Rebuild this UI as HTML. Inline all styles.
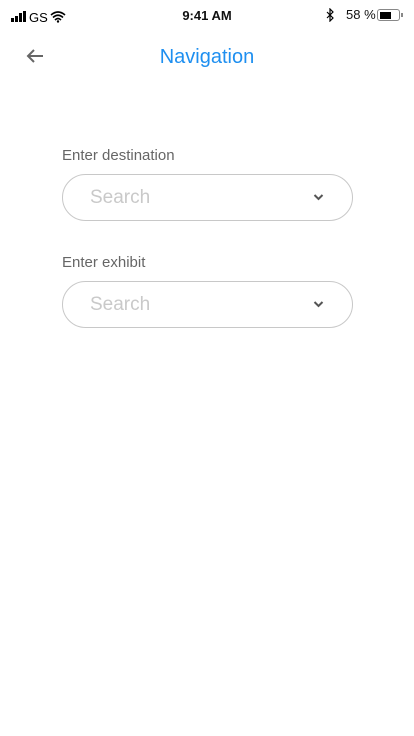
<!DOCTYPE html>
<html><head><meta charset="utf-8"><style>
body{margin:0;width:414px;height:736px;background:#fff;font-family:"Liberation Sans",sans-serif;position:relative;overflow:hidden}
.a{position:absolute}
.box{position:absolute;left:62px;width:289px;height:45px;border:1px solid #c8c8c8;border-radius:24px}
.ph{position:absolute;left:27px;top:12px;font-size:19px;color:#c9c9c9}
.lbl{position:absolute;left:62px;font-size:15px;color:#666}
</style></head><body>
<div class="a" style="left:11px;top:10px;">
<svg width="80" height="14"><rect x="0" y="8" width="3" height="4" fill="#000"/><rect x="4" y="6" width="3" height="6" fill="#000"/><rect x="8" y="3" width="3" height="9" fill="#000"/><rect x="12" y="1" width="3" height="11" fill="#000"/>
<text x="18" y="12" font-size="13" font-family="Liberation Sans">GS</text>
<path d="M40 5 Q47 -1 54 5 M42 7.5 Q47 3 52 7.5 M44 10 Q47 7 50 10" stroke="#000" stroke-width="1.6" fill="none"/><circle cx="47" cy="11.5" r="1.2" fill="#000"/></svg></div>
<div class="a" style="left:0;width:414px;top:8px;text-align:center;font-size:13px;font-weight:bold;color:#111">9:41 AM</div>
<div class="a" style="left:325px;top:8px"><svg width="10" height="14"><path d="M2 4 L8 10 L5 13 L5 1 L8 4 L2 10" stroke="#000" stroke-width="1.2" fill="none"/></svg></div>
<div class="a" style="left:346px;top:7px;font-size:13px;color:#111">58 %</div>
<div class="a" style="left:377px;top:9px;width:21px;height:10px;border:1px solid #888;border-radius:3px"><div style="margin:1.5px;width:11px;height:7px;background:#000"></div></div>
<div class="a" style="left:401px;top:13px;width:2px;height:4px;background:#888"></div>
<div class="a" style="left:26px;top:48px"><svg width="18" height="16"><path d="M17 8 H2 M8 2 L2 8 L8 14" stroke="#666" stroke-width="2" fill="none"/></svg></div>
<div class="a" style="left:0;width:414px;top:46px;text-align:center;font-size:20px;color:#1e8ff0">Navigation</div>
<div class="lbl" style="top:147px">Enter destination</div>
<div class="box" style="top:174px"><div class="ph">Search</div><svg class="a" style="left:250px;top:18px" width="12" height="9"><path d="M1.5 2 L5.5 6 L9.5 2" stroke="#555" stroke-width="2" fill="none"/></svg></div>
<div class="lbl" style="top:254px">Enter exhibit</div>
<div class="box" style="top:281px"><div class="ph">Search</div><svg class="a" style="left:250px;top:18px" width="12" height="9"><path d="M1.5 2 L5.5 6 L9.5 2" stroke="#555" stroke-width="2" fill="none"/></svg></div>
</body></html>
